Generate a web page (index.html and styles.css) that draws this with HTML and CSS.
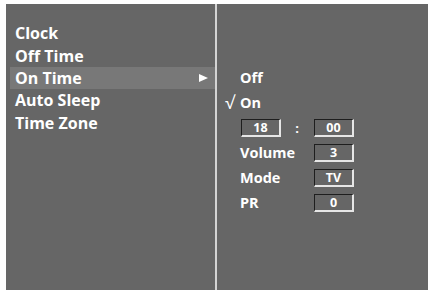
FILE: index.html
```html
<!DOCTYPE html>
<html>
<head>
<meta charset="utf-8">
<link rel="stylesheet" href="styles.css">
</head>
<body>
<div class="frame">
  <div class="menu">
    <div class="item">Clock</div>
    <div class="item">Off Time</div>
    <div class="item active"><span>On Time</span><span class="arrow"></span></div>
    <div class="item">Auto Sleep</div>
    <div class="item">Time Zone</div>
  </div>
  <div class="divider"></div>
  <div class="sub">
    <div class="row"><span class="mark"></span><span class="label">Off</span></div>
    <div class="row"><span class="mark">√</span><span class="label">On</span></div>
    <div class="row"><span class="mark"></span><span class="box">18</span><span class="colon">:</span><span class="box">00</span></div>
    <div class="row"><span class="mark"></span><span class="label fixed">Volume</span><span class="box">3</span></div>
    <div class="row"><span class="mark"></span><span class="label fixed">Mode</span><span class="box">TV</span></div>
    <div class="row"><span class="mark"></span><span class="label fixed">PR</span><span class="box">0</span></div>
  </div>
</div>
</body>
</html>
```
FILE: styles.css
```css
html, body {
  margin: 0;
  padding: 0;
  background: #ffffff;
}
body {
  font-family: "Open Sans", "DejaVu Sans", sans-serif;
  font-weight: 700;
  color: #ffffff;
}
.frame {
  margin: 4px 0 0 6px;
  width: 422px;
  height: 286px;
  background: #666666;
  display: flex;
}
.menu {
  width: 209px;
  padding-top: 18px;
  box-sizing: border-box;
}
.item {
  height: 22.4px;
  margin-left: 4px;
  padding-left: 5px;
  padding-right: 7px;
  font-size: 16px;
  line-height: 22px;
  display: flex;
  align-items: center;
  justify-content: space-between;
  white-space: nowrap;
}
.item.active {
  background: #787878;
}
.arrow {
  width: 0;
  height: 0;
  border-top: 4.5px solid transparent;
  border-bottom: 4.5px solid transparent;
  border-left: 9px solid #ffffff;
}
.divider {
  width: 2px;
  background: #d4d4d4;
}
.sub {
  flex: 1;
  padding-top: 61px;
  padding-left: 8px;
}
.row {
  height: 25px;
  display: flex;
  align-items: center;
  font-size: 14.5px;
}
.mark {
  width: 15px;
  font-size: 18px;
  font-weight: 400;
  margin-top: -1px;
}
.label.fixed {
  width: 73px;
}
.box {
  width: 37px;
  height: 15px;
  border-top: 1px solid #1e1e1e;
  border-left: 1px solid #1e1e1e;
  border-bottom: 2px solid #e6e6e6;
  border-right: 2px solid #e6e6e6;
  font-size: 12.5px;
  line-height: 15px;
  text-align: center;
  margin-left: 1px;
}
.colon {
  width: 32px;
  text-align: center;
  font-size: 13px;
}
```
